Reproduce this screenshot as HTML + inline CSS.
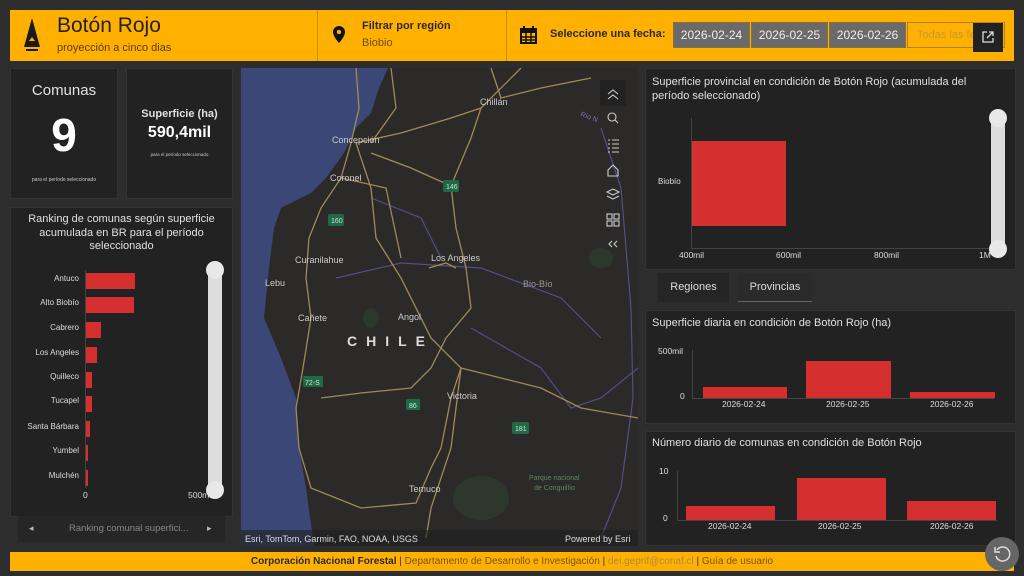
<!DOCTYPE html>
<html><head><meta charset="utf-8"><style>
*{box-sizing:border-box;margin:0;padding:0}
body{width:1024px;height:576px;background:#2d2d2d;font-family:"Liberation Sans",sans-serif;color:#ddd;position:relative;overflow:hidden}
.a{position:absolute}
.p{position:absolute;background:#222;border:1px solid #333}
.y{background:#ffb000}
.t{color:#e0e0e0}
.bar{position:absolute;background:#d5302f}
.lbl{position:absolute;font-size:8px;color:#ddd;text-align:right}
.ax{font-size:8.5px;color:#ddd;position:absolute}
</style></head><body>
<div class="a y" style="left:10px;top:10px;width:1004px;height:51px"></div>
<div class="a" style="left:317px;top:10px;width:1px;height:51px;background:#c88a00"></div>
<div class="a" style="left:506px;top:10px;width:1px;height:51px;background:#c88a00"></div>
<svg class="a" style="left:22px;top:17px" width="20" height="36" viewBox="0 0 20 36"><path d="M10 1 L18 30 L2 30 Z" fill="#1a1a1a"/><path d="M7 24 L10 20 L13 24 Z" fill="#ffb000"/><rect x="4" y="32" width="12" height="2" fill="#1a1a1a"/></svg>
<div class="a" style="left:57px;top:14px;font-size:21px;color:#222">Botón Rojo</div>
<div class="a" style="left:57px;top:42px;font-size:11px;color:#5a3c00">proyección a cinco dias</div>
<svg class="a" style="left:333px;top:26px" width="12" height="17" viewBox="0 0 12 17"><path d="M6 0a6 6 0 0 0-6 6c0 4.5 6 11 6 11s6-6.5 6-11a6 6 0 0 0-6-6z" fill="#111"/><circle cx="6" cy="6" r="2.2" fill="#ffb000"/></svg>
<div class="a" style="left:362px;top:20px;font-size:11px;color:#2a2a2a;font-weight:bold">Filtrar por región</div>
<div class="a" style="left:362px;top:37px;font-size:11px;color:#6e4e00">Biobio</div>
<svg class="a" style="left:520px;top:26px" width="17" height="18" viewBox="0 0 17 18"><rect x="1" y="3" width="15" height="14" fill="none" stroke="#111" stroke-width="2"/><rect x="1" y="3" width="15" height="4" fill="#111"/><path d="M1 11h15M1 14h15M6 7v10M11 7v10" stroke="#111" stroke-width="1.5"/><rect x="3" y="0" width="2" height="4" fill="#111"/><rect x="12" y="0" width="2" height="4" fill="#111"/></svg>
<div class="a" style="left:550px;top:28px;font-size:11px;color:#2a2a2a;font-weight:bold">Seleccione una fecha:</div>
<div class="a" style="left:673px;top:22px;width:77px;height:26px;background:#6a6a6a;border:1px solid #8a7030;color:#eee;font-size:12px;text-align:center;line-height:24px">2026-02-24</div>
<div class="a" style="left:751px;top:22px;width:77px;height:26px;background:#6a6a6a;border:1px solid #8a7030;color:#eee;font-size:12px;text-align:center;line-height:24px">2026-02-25</div>
<div class="a" style="left:829px;top:22px;width:77px;height:26px;background:#6a6a6a;border:1px solid #8a7030;color:#eee;font-size:12px;text-align:center;line-height:24px">2026-02-26</div>
<div class="a" style="left:907px;top:22px;width:98px;height:26px;border:1px solid #b08020;color:#c99a30;font-size:11px;line-height:24px;padding-left:9px;overflow:hidden">Todas las fe</div>
<div class="a" style="left:973px;top:23px;width:30px;height:29px;background:#222;"></div>
<svg class="a" style="left:982px;top:31px" width="12" height="12" viewBox="0 0 12 12"><path d="M5 1H1v10h10V7M7 1h4v4M11 1L5 7" fill="none" stroke="#ddd" stroke-width="1.3"/></svg>

<div class="p" style="left:10px;top:68px;width:108px;height:131px"></div>
<div class="a t" style="left:10px;top:82px;width:108px;text-align:center;font-size:15px">Comunas</div>
<div class="a" style="left:10px;top:108px;width:108px;text-align:center;font-size:46px;font-weight:bold;color:#fff">9</div>
<div class="a" style="left:10px;top:177px;width:108px;text-align:center;font-size:5px;color:#ccc">para el período seleccionado</div>
<div class="p" style="left:126px;top:68px;width:107px;height:131px"></div>
<div class="a t" style="left:126px;top:108px;width:107px;text-align:center;font-size:11px;font-weight:bold">Superficie (ha)</div>
<div class="a" style="left:126px;top:124px;width:107px;text-align:center;font-size:16px;font-weight:bold;color:#fff">590,4mil</div>
<div class="a" style="left:126px;top:152px;width:107px;text-align:center;font-size:4.5px;color:#ccc">para el período seleccionado</div>

<div class="p" style="left:10px;top:207px;width:223px;height:310px"></div>
<div class="a t" style="left:14px;top:213px;width:215px;text-align:center;font-size:11px;line-height:13.5px">Ranking de comunas según superficie acumulada en BR para el período seleccionado</div>
<div class="a" style="left:85px;top:270px;width:1px;height:218px;background:#444"></div>
<div class="lbl" style="left:10px;top:274px;width:69px">Antuco</div><div class="bar" style="left:86px;top:273px;width:49px;height:16px"></div>
<div class="lbl" style="left:10px;top:298px;width:69px">Alto Biobío</div><div class="bar" style="left:86px;top:297px;width:48px;height:16px"></div>
<div class="lbl" style="left:10px;top:323px;width:69px">Cabrero</div><div class="bar" style="left:86px;top:322px;width:15px;height:16px"></div>
<div class="lbl" style="left:10px;top:348px;width:69px">Los Angeles</div><div class="bar" style="left:86px;top:347px;width:11px;height:16px"></div>
<div class="lbl" style="left:10px;top:372px;width:69px">Quilleco</div><div class="bar" style="left:86px;top:372px;width:6px;height:16px"></div>
<div class="lbl" style="left:10px;top:396px;width:69px">Tucapel</div><div class="bar" style="left:86px;top:396px;width:6px;height:16px"></div>
<div class="lbl" style="left:10px;top:422px;width:69px">Santa Bárbara</div><div class="bar" style="left:86px;top:421px;width:4px;height:16px"></div>
<div class="lbl" style="left:10px;top:446px;width:69px">Yumbel</div><div class="bar" style="left:86px;top:445px;width:2px;height:16px"></div>
<div class="lbl" style="left:10px;top:471px;width:69px">Mulchén</div><div class="bar" style="left:86px;top:470px;width:2px;height:16px"></div>
<div class="ax" style="left:83px;top:490px">0</div>
<div class="ax" style="left:188px;top:490px">500mil</div>
<div class="a" style="left:208px;top:266px;width:14px;height:226px;background:#ddd;border-radius:7px"></div>
<div class="a" style="left:206px;top:261px;width:18px;height:18px;background:#e8e8e8;border-radius:9px"></div>
<div class="a" style="left:206px;top:481px;width:18px;height:18px;background:#e8e8e8;border-radius:9px"></div>
<div class="a" style="left:18px;top:516px;width:207px;height:26px;background:#262626"></div>
<div class="a" style="left:29px;top:523px;font-size:9px;color:#bbb">◂</div>
<div class="a" style="left:69px;top:523px;font-size:9.5px;color:#888">Ranking comunal superfici...</div>
<div class="a" style="left:207px;top:523px;font-size:9px;color:#bbb">▸</div>

<svg class="a" style="left:241px;top:68px" width="397" height="478" viewBox="0 0 397 478">
<rect width="397" height="478" fill="#2b2a28"/>
<path d="M0 0 L147 0 L138 20 L130 45 L115 60 L103 85 L85 110 L70 125 L40 140 L33 160 L28 200 L23 250 L40 290 L55 330 L58 380 L65 420 L73 478 L0 478 Z" fill="#3b4777"/>
<g fill="none" stroke="#5a5a9a" stroke-width="1.2" opacity=".8">
<path d="M95 210 L160 195 L240 200 L320 230 L360 270"/><path d="M360 60 L380 120 L390 240 L392 330 L380 420 L360 470"/><path d="M230 260 L300 300 L330 340 L360 330 L397 300"/><path d="M130 130 L180 150 L200 190"/>
</g>
<g fill="#2f4a2e" opacity=".45"><ellipse cx="240" cy="430" rx="28" ry="22"/><ellipse cx="360" cy="190" rx="12" ry="10"/><ellipse cx="130" cy="250" rx="8" ry="10"/></g>
<g fill="none" stroke="#a08a58" stroke-width="1.3">
<path d="M115 0 L118 40 L110 75 L100 110 L80 140 L68 170 L65 210 L70 250 L62 300 L55 340 L58 380 L70 420 L120 440 L175 435 L190 400 L200 380 L210 330 L220 300 L190 270 L175 240 L160 210 L135 170 L130 120 L115 75"/>
<path d="M115 75 L160 65 L210 50 L240 40 L280 0"/>
<path d="M130 85 L170 100 L210 118 L215 160 L225 200 L230 240 L205 270 L190 300 L170 320 L120 325 L80 330"/>
<path d="M210 118 L230 70 L240 40"/>
<path d="M100 110 L145 120 L160 190"/>
<path d="M220 300 L260 310 L300 320 L340 340 L397 350"/>
<path d="M150 0 L155 40 L130 75"/><path d="M250 0 L260 30 L300 20 L350 10"/><path d="M185 470 L190 440 L210 380 L220 300"/>
<path d="M188 200 L205 195 L215 200"/>
</g>
<g font-family="Liberation Sans" fill="#ccc" font-size="9">
<text x="239" y="37">Chillán</text><text x="91" y="75">Concepción</text><text x="89" y="113">Coronel</text>
<text x="54" y="195">Curanilahue</text><text x="24" y="218">Lebu</text><text x="57" y="253">Cañete</text>
<text x="190" y="193">Los Angeles</text><text x="157" y="252">Angol</text><text x="282" y="219" fill="#999">Bio-Bío</text>
<text x="206" y="331">Victoria</text><text x="168" y="424">Temuco</text>
<text x="106" y="278" font-size="14" font-weight="bold" letter-spacing="9" fill="#ddd">CHILE</text>
<text x="339" y="48" font-size="7" fill="#7a7ab0" transform="rotate(20 339 48)">Río N</text>
<text x="288" y="412" font-size="7" fill="#5a8a5a">Parque nacional</text><text x="293" y="422" font-size="7" fill="#5a8a5a">de Conguillío</text>
</g>
<g font-family="Liberation Sans" font-size="7" fill="#ddd">
<rect x="202" y="112" width="16" height="12" rx="2" fill="#1e6a45"/><text x="205" y="121">146</text>
<rect x="87" y="146" width="16" height="12" rx="2" fill="#1e6a45"/><text x="90" y="155">160</text>
<rect x="62" y="308" width="20" height="11" rx="1" fill="#1e6a45"/><text x="64" y="317">72-S</text>
<rect x="165" y="331" width="14" height="11" rx="1" fill="#1e6a45"/><text x="168" y="340">86</text>
<rect x="271" y="354" width="17" height="12" rx="2" fill="#1e6a45"/><text x="274" y="363">181</text>
</g>
<rect x="0" y="462" width="397" height="16" fill="#1f1f1f" opacity=".6"/>
<text x="4" y="474" font-family="Liberation Sans" font-size="9" fill="#ddd">Esri, TomTom, Garmin, FAO, NOAA, USGS</text>
<text x="324" y="474" font-family="Liberation Sans" font-size="9" fill="#ddd">Powered by Esri</text>
<rect x="359" y="12" width="26" height="26" fill="#222"/>
<g fill="none" stroke="#ccc" stroke-width="1.1">
<path d="M367 26l5-4 5 4M367 31l5-4 5 4"/>
<circle cx="371" cy="49" r="4"/><path d="M374 52l3 3"/>
<path d="M367 72h2M371 72h7M367 76h2M371 76h7M367 80h2M371 80h7M367 84h2M371 84h7" />
<path d="M367 102l5-5 5 5v6h-10z"/>
<path d="M366 124l6-3 6 3-6 3zM366 128l6 3 6-3"/>
<rect x="366" y="146" width="5" height="5"/><rect x="373" y="146" width="5" height="5"/><rect x="366" y="153" width="5" height="5"/><rect x="373" y="153" width="5" height="5"/>
<path d="M371 173l-3 3 3 3M376 173l-3 3 3 3"/>
</g>
</svg>

<div class="p" style="left:645px;top:68px;width:371px;height:202px"></div>
<div class="a t" style="left:652px;top:75px;width:340px;font-size:11px;line-height:14px">Superficie provincial en condición de Botón Rojo (acumulada del período seleccionado)</div>
<div class="a" style="left:691px;top:118px;width:1px;height:130px;background:#444"></div>
<div class="a" style="left:691px;top:248px;width:300px;height:1px;background:#444"></div>
<div class="bar" style="left:692px;top:141px;width:94px;height:85px"></div>
<div class="ax" style="left:658px;top:177px;font-size:8px">Biobío</div>
<div class="ax" style="left:679px;top:250px">400mil</div>
<div class="ax" style="left:776px;top:250px">600mil</div>
<div class="ax" style="left:874px;top:250px">800mil</div>
<div class="ax" style="left:979px;top:250px">1M</div>
<div class="a" style="left:991px;top:114px;width:14px;height:136px;background:#ddd;border-radius:7px"></div>
<div class="a" style="left:989px;top:109px;width:18px;height:18px;background:#e8e8e8;border-radius:9px"></div>
<div class="a" style="left:989px;top:240px;width:18px;height:18px;background:#e8e8e8;border-radius:9px"></div>
<div class="a" style="left:658px;top:273px;width:71px;height:29px;background:#252525;color:#ddd;font-size:11px;text-align:center;line-height:29px">Regiones</div>
<div class="a" style="left:738px;top:273px;width:74px;height:29px;background:#2a2a2a;border-bottom:1px solid #666;color:#ddd;font-size:11px;text-align:center;line-height:29px">Provincias</div>
<div class="p" style="left:645px;top:310px;width:371px;height:114px"></div>
<div class="a t" style="left:652px;top:317px;font-size:11px">Superficie diaria en condición de Botón Rojo (ha)</div>
<div class="a" style="left:692px;top:350px;width:1px;height:49px;background:#444"></div>
<div class="a" style="left:692px;top:398px;width:302px;height:1px;background:#444"></div>
<div class="ax" style="left:658px;top:346px">500mil</div><div class="ax" style="left:680px;top:391px">0</div>
<div class="bar" style="left:703px;top:387px;width:84px;height:11px"></div>
<div class="bar" style="left:806px;top:361px;width:85px;height:37px"></div>
<div class="bar" style="left:910px;top:392px;width:85px;height:6px"></div>
<div class="ax" style="left:722px;top:399px">2026-02-24</div><div class="ax" style="left:826px;top:399px">2026-02-25</div><div class="ax" style="left:930px;top:399px">2026-02-26</div>
<div class="p" style="left:645px;top:431px;width:371px;height:115px"></div>
<div class="a t" style="left:652px;top:437px;font-size:11px">Número diario de comunas en condición de Botón Rojo</div>
<div class="a" style="left:677px;top:471px;width:1px;height:50px;background:#444"></div>
<div class="a" style="left:677px;top:520px;width:320px;height:1px;background:#444"></div>
<div class="ax" style="left:659px;top:466px">10</div><div class="ax" style="left:663px;top:513px">0</div>
<div class="bar" style="left:686px;top:506px;width:89px;height:14px"></div>
<div class="bar" style="left:797px;top:478px;width:89px;height:42px"></div>
<div class="bar" style="left:907px;top:501px;width:89px;height:19px"></div>
<div class="ax" style="left:708px;top:521px">2026-02-24</div><div class="ax" style="left:818px;top:521px">2026-02-25</div><div class="ax" style="left:930px;top:521px">2026-02-26</div>

<div class="a y" style="left:10px;top:552px;width:1004px;height:19px"></div>
<div class="a" style="left:10px;top:556px;width:1004px;text-align:center;font-size:10px;color:#7a5400"><b style="color:#2a2a2a">Corporación Nacional Forestal</b> <span style="color:#333">|</span> Departamento de Desarrollo e Investigación <span style="color:#333">|</span> <span style="color:#b08a40">dei.geprif@conaf.cl</span> <span style="color:#333">|</span> Guía de usuario</div>
<div class="a" style="left:985px;top:537px;width:34px;height:34px;border-radius:17px;background:#666"></div>
<svg class="a" style="left:992px;top:544px" width="20" height="20" viewBox="0 0 20 20"><path d="M5 6a7 7 0 1 1-1 6" fill="none" stroke="#ddd" stroke-width="1.5"/><path d="M3 3v5h5" fill="none" stroke="#ddd" stroke-width="1.5"/></svg>
</body></html>
